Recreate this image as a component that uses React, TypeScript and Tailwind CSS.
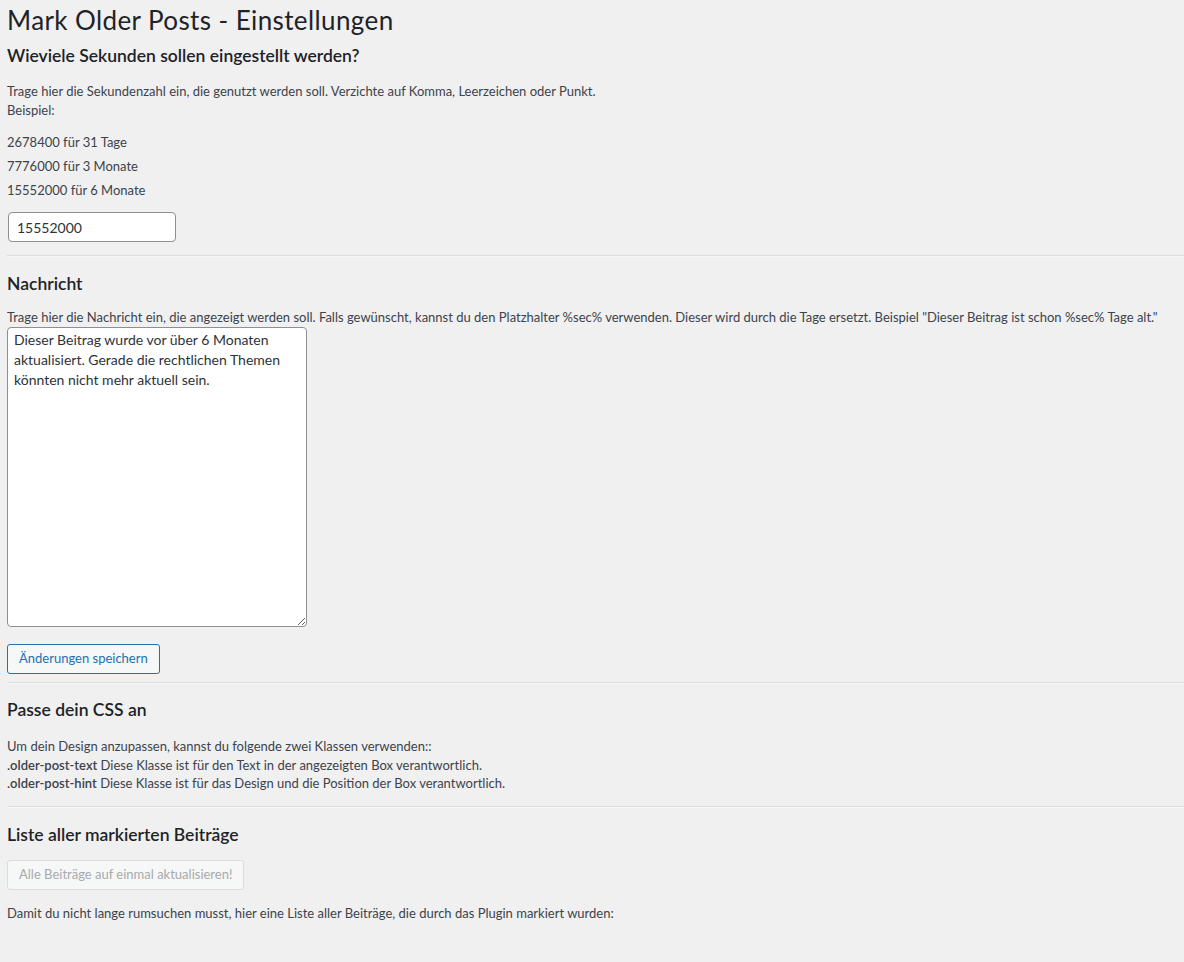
import React from 'react';

const font = "font-['Lato','Noto_Sans',sans-serif]";

const Divider: React.FC<{ className?: string }> = ({ className = '' }) => (
  <div className={`border-t border-[#dcdcde] border-b border-b-[#f6f7f7] ${className}`} />
);

const App: React.FC = () => {
  return (
    <div className={`min-h-[962px] bg-[#f0f0f1] pl-[7px] pt-[4px] pb-8 text-[#3c434a] ${font}`}>
      <h1 className="text-[26px] leading-[32px] tracking-[0.4px] text-[#1d2327]">Mark Older Posts - Einstellungen</h1>

      {/* Sekunden */}
      <h2 className="mt-[8px] text-[17.5px] leading-[24px] font-semibold text-[#1d2327]">
        Wieviele Sekunden sollen eingestellt werden?
      </h2>
      <p className="mt-[14px] text-[13px] leading-[19px]">
        Trage hier die Sekundenzahl ein, die genutzt werden soll. Verzichte auf Komma, Leerzeichen oder Punkt.
        <br />
        Beispiel:
      </p>
      <div className="mt-[10px] text-[13px] leading-[24px]">
        <div>2678400 für 31 Tage</div>
        <div>7776000 für 3 Monate</div>
        <div>15552000 für 6 Monate</div>
      </div>
      <input
        type="text"
        defaultValue="15552000"
        className="mt-[10px] ml-px block h-[30px] w-[168px] rounded-[4px] border border-[#8c8f94] bg-white px-[8px] text-[14px] text-[#2c3338] outline-none"
      />
      <Divider className="mt-[13px]" />

      {/* Nachricht */}
      <h2 className="mt-[15px] text-[17.5px] leading-[24px] font-semibold text-[#1d2327]">Nachricht</h2>
      <p className="mt-[12px] text-[13px] leading-[19px]">
        Trage hier die Nachricht ein, die angezeigt werden soll. Falls gewünscht, kannst du den Platzhalter %sec% verwenden. Dieser wird durch die Tage ersetzt. Beispiel "Dieser Beitrag ist schon %sec% Tage alt."
      </p>
      <textarea
        defaultValue="Dieser Beitrag wurde vor über 6 Monaten aktualisiert. Gerade die rechtlichen Themen könnten nicht mehr aktuell sein."
        className="block h-[300px] w-[300px] rounded-[4px] border border-[#8c8f94] bg-white px-[6px] py-[2px] text-[14px] leading-[20px] text-[#2c3338] outline-none"
      />
      <button className="mt-[17px] block h-[30px] rounded-[3px] border border-[#2271b1] bg-[#f6f7f7] px-[11px] text-[13px] text-[#2271b1]">
        Änderungen speichern
      </button>
      <Divider className="mt-[8px]" />

      {/* CSS */}
      <h2 className="mt-[14px] text-[17.5px] leading-[24px] font-semibold text-[#1d2327]">Passe dein CSS an</h2>
      <p className="mt-[15px] text-[13px] leading-[18.5px]">
        Um dein Design anzupassen, kannst du folgende zwei Klassen verwenden::
        <br />
        <strong className="font-semibold">.older-post-text</strong> Diese Klasse ist für den Text in der angezeigten Box verantwortlich.
        <br />
        <strong className="font-semibold">.older-post-hint</strong> Diese Klasse ist für das Design und die Position der Box verantwortlich.
      </p>
      <Divider className="mt-[13px]" />

      {/* Liste */}
      <h2 className="mt-[15px] text-[17.5px] leading-[24px] font-semibold text-[#1d2327]">Liste aller markierten Beiträge</h2>
      <button
        disabled
        className="mt-[13px] block h-[30px] rounded-[3px] border border-[#dcdcde] bg-[#f6f7f7] px-[11px] text-[13px] text-[#a7aaad]"
      >
        Alle Beiträge auf einmal aktualisieren!
      </button>
      <p className="mt-[14px] text-[13px] leading-[19px]">
        Damit du nicht lange rumsuchen musst, hier eine Liste aller Beiträge, die durch das Plugin markiert wurden:
      </p>
    </div>
  );
};

export default App;
